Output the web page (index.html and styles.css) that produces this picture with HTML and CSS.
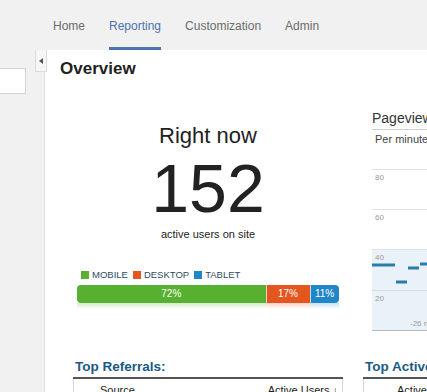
FILE: index.html
```html
<!DOCTYPE html>
<html>
<head>
<meta charset="utf-8">
<link rel="stylesheet" href="styles.css">
</head>
<body>
<nav class="nav">
  <a class="tab">Home</a>
  <a class="tab active">Reporting</a>
  <a class="tab">Customization</a>
  <a class="tab">Admin</a>
</nav>
<div class="layout">
  <aside class="sidebar">
    <div class="search"></div>
    <div class="collapse"><span class="tri"></span></div>
  </aside>
  <main class="main">
    <h1 class="title">Overview</h1>
    <div class="columns">
      <section class="col-center">
        <div class="rightnow">Right now</div>
        <div class="count">152</div>
        <div class="sub">active users on site</div>
        <div class="legend">
          <span class="legend-item"><span class="swatch mobile"></span>MOBILE</span>
          <span class="legend-item"><span class="swatch desktop"></span>DESKTOP</span>
          <span class="legend-item"><span class="swatch tablet"></span>TABLET</span>
        </div>
        <div class="bar">
          <div class="seg mobile" style="width:72%">72%</div>
          <div class="seg desktop" style="width:17%">17%</div>
          <div class="seg tablet" style="width:11%">11%</div>
        </div>
        <div class="reflect"></div>
        <h2 class="section-title">Top Referrals:</h2>
        <table class="tbl">
          <tr><th class="th-src">Source</th><th class="th-num">Active Users ↓</th></tr>
        </table>
      </section>
      <section class="col-right">
        <div class="pv-title">Pageviews</div>
        <div class="pv-sub">Per minute</div>
        <svg class="chart" width="80" height="182" viewBox="0 0 80 182">
          <rect x="0" y="99" width="80" height="81" fill="#eaf2f9"/>
          <line x1="0" x2="80" y1="19.5" y2="19.5" stroke="#e3e3e3"/>
          <line x1="0" x2="80" y1="59.5" y2="59.5" stroke="#e3e3e3"/>
          <line x1="0" x2="80" y1="99.5" y2="99.5" stroke="#dde3e8"/>
          <line x1="0" x2="80" y1="140.5" y2="140.5" stroke="#d5dde4"/>
          <line x1="0" x2="80" y1="180.5" y2="180.5" stroke="#b8b8b8"/>
          <text x="3" y="30" class="axis">80</text>
          <text x="3" y="70" class="axis">60</text>
          <text x="3" y="110" class="axis">40</text>
          <text x="3" y="151" class="axis">20</text>
          <text x="38" y="176" class="axis">-26 min</text>
          <rect x="0" y="113.5" width="23" height="3" fill="#2a7dab"/>
          <rect x="24" y="130.5" width="11" height="3" fill="#2a7dab"/>
          <rect x="36" y="116.5" width="11" height="3" fill="#2a7dab"/>
          <rect x="48" y="112.5" width="32" height="3" fill="#2a7dab"/>
        </svg>
        <h2 class="section-title">Top Active Pages:</h2>
        <table class="tbl">
          <tr><th class="th-act">Active Page</th></tr>
        </table>
      </section>
    </div>
  </main>
</div>
</body>
</html>
```
FILE: styles.css
```css
body {
  margin: 0;
  width: 427px;
  height: 392px;
  overflow: hidden;
  background: #fff;
  font-family: "Liberation Sans", Arial, sans-serif;
}

.nav {
  height: 50px;
  background: #f1f1f1;
  display: flex;
  gap: 24px;
  padding-left: 53px;
  box-sizing: border-box;
}

.tab {
  height: 50px;
  box-sizing: border-box;
  padding-top: 19px;
  font-size: 12px;
  line-height: 14px;
  color: #6b6b6b;
  text-decoration: none;
}

.tab.active {
  color: #4b74b0;
  border-bottom: 3px solid #4b74b0;
}

.layout {
  display: flex;
  height: 342px;
}

.sidebar {
  width: 44px;
  flex: none;
  background: #f1f1f1;
  border-right: 1px solid #e3e3e3;
  position: relative;
}

.search {
  margin-top: 18px;
  margin-left: -2px;
  width: 26px;
  height: 24px;
  background: #fff;
  border: 1px solid #d3d3d3;
}

.collapse {
  position: absolute;
  top: 0;
  right: -3px;
  width: 10px;
  height: 21px;
  background: #f6f6f6;
  border: 1px solid #dcdcdc;
  border-top: none;
  display: flex;
  align-items: center;
  justify-content: center;
}

.tri {
  width: 0;
  height: 0;
  border-right: 4px solid #555;
  border-top: 3px solid transparent;
  border-bottom: 3px solid transparent;
}

.main {
  flex: 1;
  min-width: 0;
  overflow: hidden;
  padding: 9px 0 0 15px;
}

.title {
  margin: 0;
  font-size: 17px;
  line-height: 20px;
  font-weight: bold;
  color: #222;
}

.columns {
  display: flex;
  margin-left: 13px;
}

.col-center {
  width: 270px;
  flex: none;
  padding-top: 44px;
}

.col-right {
  width: 220px;
  flex: none;
  margin-left: 20px;
  padding-top: 30px;
}

.rightnow {
  text-align: center;
  font-size: 22px;
  line-height: 26px;
  color: #222;
}

.count {
  text-align: center;
  font-size: 68px;
  line-height: 68px;
  margin-top: 5px;
  color: #222;
}

.sub {
  text-align: center;
  font-size: 11px;
  line-height: 14px;
  margin-top: 5px;
  color: #222;
}

.legend {
  display: flex;
  gap: 5px;
  margin: 28px 0 0 8px;
  font-size: 9.5px;
  line-height: 12px;
  color: #2f4a66;
}

.legend-item {
  display: flex;
  align-items: center;
  gap: 3px;
}

.swatch {
  width: 8px;
  height: 8px;
}

.mobile { background: #57b030; }
.desktop { background: #e4561f; }
.tablet { background: #1f86c8; }

.bar {
  display: flex;
  margin: 4px 4px 0;
  height: 18px;
  border-radius: 4px;
  overflow: hidden;
}

.seg {
  color: #fff;
  font-size: 10px;
  line-height: 18px;
  text-align: center;
}

.seg + .seg {
  box-shadow: inset 1px 0 0 rgba(255, 255, 255, 0.7);
}

.reflect {
  margin: 0 4px;
  height: 6px;
  background:
    linear-gradient(to bottom, rgba(255, 255, 255, 0.75), #fff),
    linear-gradient(to right, #57b030 0 72%, #e4561f 72% 89%, #1f86c8 89%);
}

.section-title {
  margin: 50px 0 2px 2px;
  font-size: 13.5px;
  line-height: 16px;
  font-weight: bold;
  color: #1b5a86;
}

.col-right .section-title {
  margin-top: 27px;
}

.tbl {
  width: 100%;
  border-collapse: collapse;
  border-top: 2px solid #555;
  border-left: 1px solid #d5d5d5;
  border-right: 1px solid #d5d5d5;
}

.tbl th {
  font-size: 11px;
  line-height: 13px;
  font-weight: normal;
  color: #222;
  padding: 5px 4px;
}

.th-src {
  text-align: left;
  padding-left: 26px !important;
}

.th-num {
  text-align: right;
}

.th-act {
  text-align: left;
  padding-left: 33px !important;
}

.pv-title {
  margin-left: 9px;
  font-size: 14px;
  line-height: 18px;
  color: #333;
  padding-bottom: 2px;
  border-bottom: 1px solid #cfcfcf;
}

.pv-sub {
  margin: 2px 0 0 12px;
  font-size: 11px;
  line-height: 14px;
  color: #444;
}

.chart {
  display: block;
  margin: 4px 0 0 9px;
}

.axis {
  font-size: 8px;
  fill: #9a9a9a;
  font-family: "Liberation Sans", Arial, sans-serif;
}
```
